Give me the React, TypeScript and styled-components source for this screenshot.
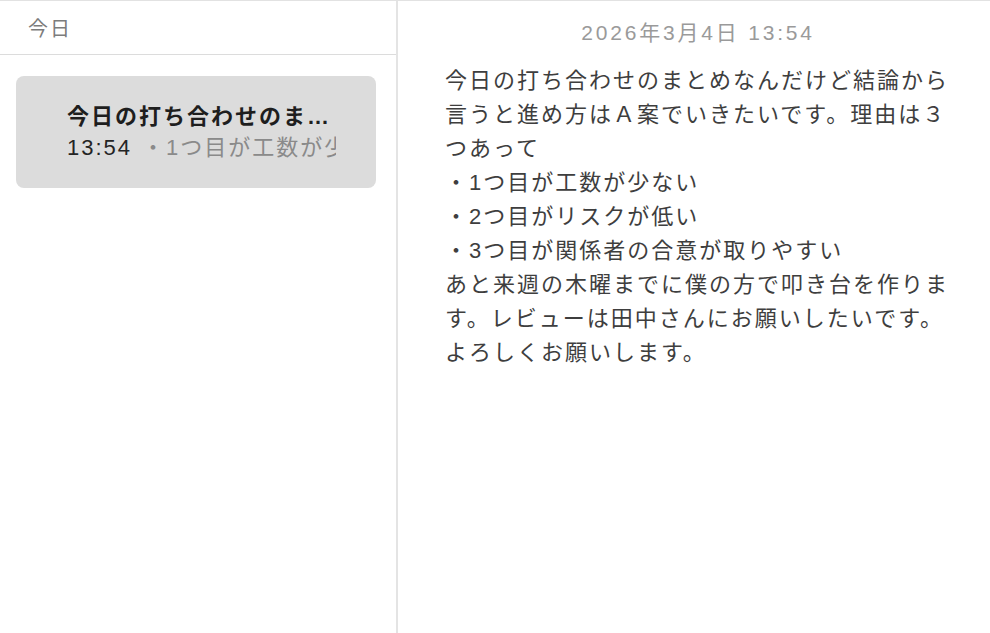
import React from 'react';
import styled, { createGlobalStyle } from 'styled-components';

const GlobalStyle = createGlobalStyle`
  html, body {
    margin: 0;
    padding: 0;
    background: #ffffff;
  }
  body {
    font-family: 'Liberation Sans', 'Noto Sans CJK JP', sans-serif;
    -webkit-font-smoothing: antialiased;
  }
`;

const NotesWindow = styled.div`
  display: flex;
  width: 100vw;
  height: 100vh;
  box-sizing: border-box;
  border-top: 1px solid #e2e2e2;
  background: #ffffff;
  overflow: hidden;
`;

const Sidebar = styled.aside`
  width: 396px;
  flex-shrink: 0;
  display: flex;
  flex-direction: column;
  border-right: 2px solid #e4e4e4;
`;

const SectionHeader = styled.div`
  height: 53px;
  display: flex;
  align-items: center;
  padding-left: 28px;
  border-bottom: 1px solid #dcdcdc;
  font-size: 20px;
  letter-spacing: 2px;
  color: #7c7c7c;
`;

const NoteList = styled.div`
  display: flex;
  flex-direction: column;
  gap: 8px;
  padding: 21px 20px 0 16px;
`;

const NoteCard = styled.div<{ selected?: boolean }>`
  height: 112px;
  box-sizing: border-box;
  padding: 0 40px 0 51px;
  border-radius: 8px;
  background: ${props => (props.selected ? '#dcdcdc' : 'transparent')};
  display: flex;
  flex-direction: column;
  justify-content: center;
  gap: 1px;
  cursor: pointer;
`;

const NoteTitle = styled.div`
  font-size: 22px;
  line-height: 30px;
  font-weight: 700;
  letter-spacing: 2px;
  color: #1e1e1e;
  white-space: nowrap;
  overflow: hidden;
  text-overflow: ellipsis;
`;

const NoteMeta = styled.div`
  font-size: 22px;
  line-height: 30px;
  letter-spacing: 2px;
  white-space: nowrap;
  overflow: hidden;
  text-overflow: clip;
`;

const NoteTime = styled.span`
  color: #242424;
  margin-right: 10px;
`;

const NotePreview = styled.span`
  color: #8a8a8a;
`;

const Detail = styled.main`
  flex: 1;
  display: flex;
  flex-direction: column;
  padding: 19px 0 0 47px;
`;

const Timestamp = styled.div`
  text-align: center;
  width: 506px;
  font-size: 21px;
  line-height: 26px;
  letter-spacing: 2.8px;
  color: #9a9a9a;
`;

const NoteBody = styled.div`
  width: 515px;
  margin-top: 18px;
  font-size: 22px;
  line-height: 34px;
  letter-spacing: 2px;
  color: #3e3e3e;
  white-space: pre-wrap;
`;

const notes = [
  {
    id: 1,
    title: '今日の打ち合わせのまとめなんだけど結論から',
    time: '13:54',
    preview: '・1つ目が工数が少ない',
  },
];

const bodyText = [
  '今日の打ち合わせのまとめなんだけど結論から言うと進め方はＡ案でいきたいです。理由は３つあって',
  '・1つ目が工数が少ない',
  '・2つ目がリスクが低い',
  '・3つ目が関係者の合意が取りやすい',
  'あと来週の木曜までに僕の方で叩き台を作ります。レビューは田中さんにお願いしたいです。よろしくお願いします。',
].join('\n');

const App: React.FC = () => {
  return (
    <>
      <GlobalStyle />
      <NotesWindow>
        <Sidebar>
          <SectionHeader>今日</SectionHeader>
          <NoteList>
            {notes.map(note => (
              <NoteCard key={note.id} selected>
                <NoteTitle>{note.title}</NoteTitle>
                <NoteMeta>
                  <NoteTime>{note.time}</NoteTime>
                  <NotePreview>{note.preview}</NotePreview>
                </NoteMeta>
              </NoteCard>
            ))}
          </NoteList>
        </Sidebar>

        <Detail>
          <Timestamp>2026年3月4日 13:54</Timestamp>
          <NoteBody>{bodyText}</NoteBody>
        </Detail>
      </NotesWindow>
    </>
  );
};

export default App;
